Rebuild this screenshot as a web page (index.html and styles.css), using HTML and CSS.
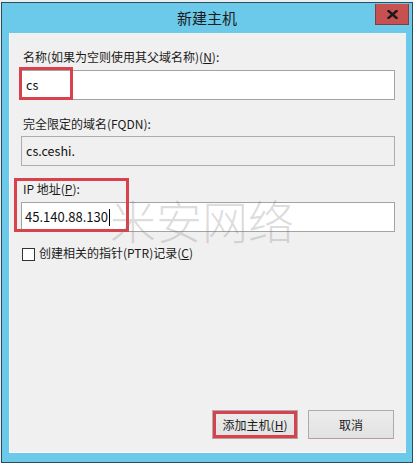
FILE: index.html
```html
<!DOCTYPE html>
<html lang="zh-CN">
<head>
<meta charset="utf-8">
<title>新建主机</title>
<link rel="stylesheet" href="styles.css">
</head>
<body>
<div class="window">
  <div class="titlebar">
    <span class="title">新建主机</span>
    <button class="close" aria-label="关闭">
      <svg width="11" height="9" viewBox="0 0 11 9"><path d="M1.5 1 L9.5 8 M9.5 1 L1.5 8" stroke="#1a1a1a" stroke-width="2.4" stroke-linecap="square"/></svg>
    </button>
  </div>
  <div class="panel">
    <div class="field field-name">
      <div class="label">名称(如果为空则使用其父域名称)(<u>N</u>):</div>
      <div class="textbox">cs</div>
      <div class="mark mark-name"></div>
    </div>
    <div class="field field-fqdn">
      <div class="label">完全限定的域名(FQDN):</div>
      <div class="textbox disabled">cs.ceshi.</div>
    </div>
    <div class="field field-ip">
      <div class="label">IP 地址(<u>P</u>):</div>
      <div class="textbox ip">45.140.88.130<span class="caret"></span></div>
      <div class="mark mark-ip"></div>
    </div>
    <label class="check">
      <span class="box"></span>
      <span>创建相关的指针(PTR)记录(<u>C</u>)</span>
    </label>
    <div class="buttons">
      <button class="btn btn-primary">添加主机(<u>H</u>)</button>
      <button class="btn">取消</button>
    </div>
    <div class="watermark">米安网络</div>
  </div>
</div>
</body>
</html>
```
FILE: styles.css
```css
html, body {
  margin: 0;
  padding: 0;
  background: #e9eef0;
}
body {
  width: 413px;
  height: 463px;
  overflow: hidden;
  font-family: "Noto Sans CJK SC", "Noto Sans", sans-serif;
  font-size: 12px;
  color: #1a1a1a;
}
.window {
  margin: 2px 0 0 1px;
  width: 412px;
  height: 461px;
  box-sizing: border-box;
  border: 1px solid #2f4c5c;
  background: #6bc9e9;
  display: flex;
  flex-direction: column;
}
.titlebar {
  position: relative;
  height: 30px;
  display: flex;
  align-items: center;
  justify-content: center;
  flex: none;
}
.title {
  font-size: 15px;
  color: #1c1c1c;
  line-height: 20px;
}
.close {
  position: absolute;
  right: 3px;
  top: 1px;
  width: 34px;
  height: 21px;
  padding: 0;
  margin: 0;
  background: #c75050;
  border: 1px solid #7c4040;
  border-top: none;
  display: flex;
  align-items: center;
  justify-content: center;
}
.panel {
  position: relative;
  margin: 0 6px 0 7px;
  height: 420px;
  box-sizing: border-box;
  background: #f0f0f0;
  border-left: 1px solid #fbfbfb;
  border-bottom: 1px solid #fbfbfb;
  padding: 16px 11px 13px 11px;
  display: flex;
  flex-direction: column;
}
.field {
  position: relative;
}
.label {
  line-height: 16px;
  padding-left: 2px;
  white-space: nowrap;
}
.textbox {
  box-sizing: border-box;
  height: 30px;
  width: 374px;
  background: #fff;
  border: 1px solid #a3a3a3;
  padding-left: 4px;
  line-height: 26px;
  font-size: 12.5px;
  color: #111;
  display: flex;
  align-items: center;
}
.field-name .textbox { margin-top: 5px; }
.field-fqdn { margin-top: 16px; }
.field-fqdn .textbox { margin-top: 4px; }
.textbox.disabled {
  background: #f0f0f0;
  border-color: #adadad;
}
.field-ip { margin-top: 15px; }
.field-ip .textbox { margin-top: 5px; }
.textbox.ip {
  font-size: 13px;
  padding-left: 3px;
}
.caret {
  display: inline-block;
  width: 1px;
  height: 17px;
  background: #000;
  margin-left: 1px;
}
.mark {
  position: absolute;
  box-sizing: border-box;
  border: 3px solid #d8424c;
  pointer-events: none;
}
.mark-name {
  left: -2px;
  top: 18px;
  width: 54px;
  height: 33px;
}
.mark-ip {
  left: -7px;
  top: -3px;
  width: 115px;
  height: 54px;
}
.check {
  margin-top: 13px;
  display: flex;
  align-items: center;
  line-height: 16px;
  padding-left: 1px;
}
.box {
  width: 13px;
  height: 13px;
  box-sizing: border-box;
  background: #fff;
  border: 1px solid #333;
  margin-right: 4px;
  margin-top: 2px;
}
.buttons {
  margin-top: auto;
  display: flex;
  justify-content: flex-end;
  gap: 10px;
  padding-right: 1px;
}
.btn {
  width: 86px;
  height: 29px;
  box-sizing: border-box;
  font-family: "Noto Sans CJK SC", "Noto Sans", sans-serif;
  font-size: 12px;
  color: #1a1a1a;
  background: linear-gradient(#ececec, #e2e2e2);
  border: 1px solid #acacac;
  border-bottom-color: #b89ca0;
  padding: 0;
  margin: 0;
}
.btn-primary {
  box-shadow: inset 0 0 0 3px #d8424c;
}
.watermark {
  position: absolute;
  left: 100px;
  top: 163px;
  font-size: 46px;
  font-weight: 300;
  line-height: 46px;
  color: rgba(120, 120, 120, 0.26);
  pointer-events: none;
  white-space: nowrap;
}
```
